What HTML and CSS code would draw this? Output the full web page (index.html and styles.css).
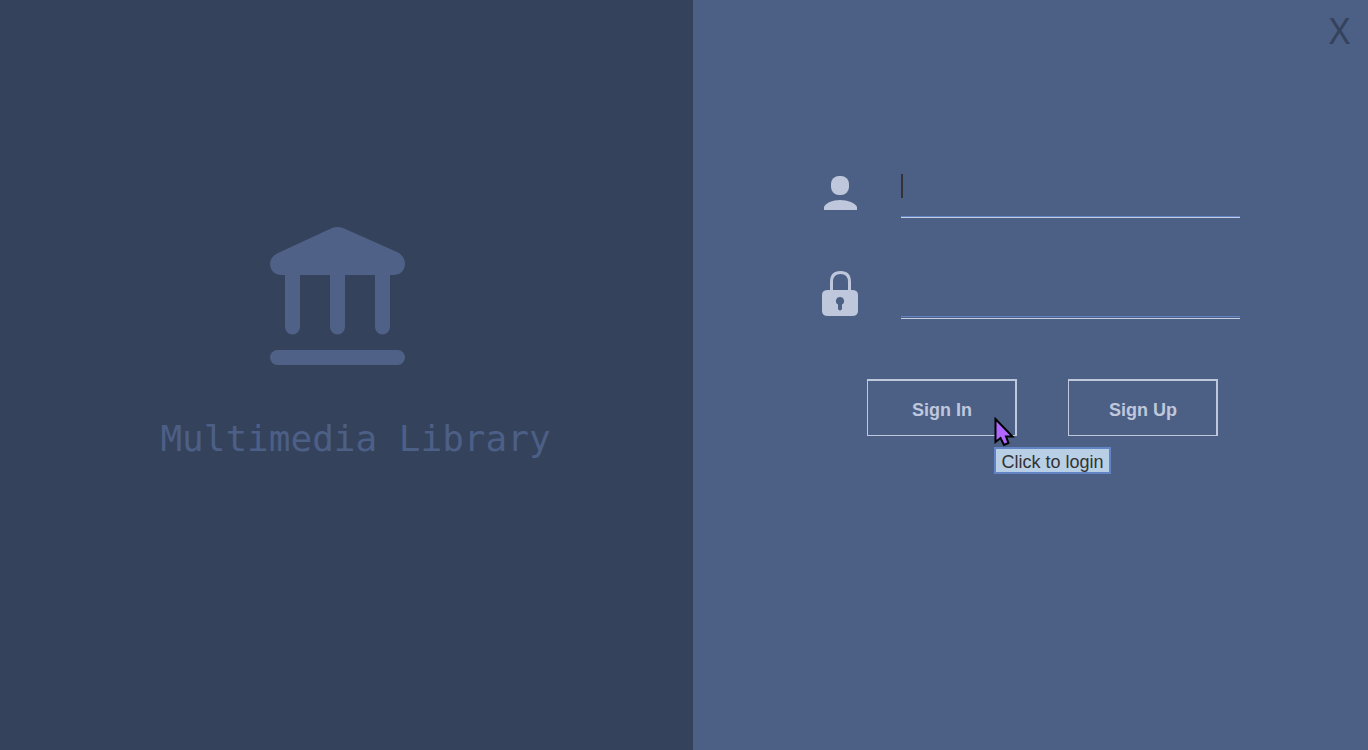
FILE: index.html
```html
<!DOCTYPE html>
<html lang="en">
<head>
<meta charset="utf-8">
<title>Multimedia Library</title>
<link rel="stylesheet" href="styles.css">
</head>
<body>
<main class="app">
  <section class="brand">
    <svg class="brand-logo" viewBox="0 0 135 138" aria-hidden="true">
      <path d="M8 26L62 1Q67.500 -1 73 1L127 25Q135 29 135 37Q134 48 123 48H120V100A7.500 7.500 0 0 1 105 100V48H75V100A7.500 7.500 0 0 1 60 100V48H30V100A7.500 7.500 0 0 1 15 100V48H12Q1 48 0 37Q0 30 8 26Z"/>
      <rect x="0" y="123" width="135" height="15" rx="7.500"/>
    </svg>
    <h1 class="brand-title">Multimedia Library</h1>
  </section>
  <section class="login">
    <button class="close" type="button" aria-label="Close">X</button>
    <form class="form">
      <div class="field">
        <label class="field-icon" for="user" aria-label="Username">
          <svg class="icon" viewBox="0 0 36 48" aria-hidden="true">
            <rect x="9" y="6" width="18" height="19" rx="8"/>
            <path d="M2 40V37C4 33 10 30 18 30S33 33 35 37V40Z"/>
          </svg>
        </label>
        <div class="entry">
          <input class="input" id="user" type="text" autocomplete="off">
          <span class="caret"></span>
        </div>
      </div>
      <div class="field">
        <label class="field-icon" for="pass" aria-label="Password">
          <svg class="icon" viewBox="0 0 36 48" aria-hidden="true">
            <path class="shackle" d="M9.500 21V12C9.500 5 13 2.500 18.500 2.500S27.500 5 27.500 12V21"/>
            <path fill-rule="evenodd" d="M6 20H30Q36 20 36 25V41Q36 46 30 46H6Q0 46 0 41V25Q0 20 6 20ZM18 27A4 4 0 0 0 16 34.500V39Q18 42 20 39V34.500A4 4 0 0 0 18 27Z"/>
          </svg>
        </label>
        <div class="entry entry-double">
          <input class="input" id="pass" type="password">
        </div>
      </div>
      <div class="actions">
        <div class="action">
          <button class="button" type="button" aria-describedby="tip">Sign In</button>
          <svg class="pointer" viewBox="0 0 22 30" aria-hidden="true">
            <path d="M1.500 2V25L6.500 21L10 28L14.500 26L12 19.500H18.500Z"/>
          </svg>
          <span class="tooltip" id="tip" role="tooltip">Click to login</span>
        </div>
        <button class="button" type="button">Sign Up</button>
      </div>
    </form>
  </section>
</main>
</body>
</html>
```
FILE: styles.css
```css
* {
  box-sizing: border-box;
}

body {
  margin: 0;
  font-family: "Liberation Sans", Arial, sans-serif;
  font-size: 18px;
}

.app {
  display: grid;
  grid-template-columns: 693fr 675fr;
  min-height: 100vh;
}

.brand {
  display: flex;
  flex-direction: column;
  align-items: center;
  padding: 227px 0 0 18px;
  background: #35425b;
}

.brand-logo {
  width: 135px;
  height: 138px;
  margin-right: 36px;
  fill: #4f6186;
}

.brand-title {
  margin: 52px 0 0;
  font-family: "DejaVu Sans Mono", monospace;
  font-size: 36px;
  font-weight: 400;
  line-height: 44px;
  white-space: nowrap;
  color: #4c5f86;
}

.login {
  display: flex;
  flex-direction: column;
  padding: 11px 18px 0 0;
  background: #4c5f85;
}

.close {
  align-self: flex-end;
  padding: 0;
  border: 0;
  background: none;
  color: #35425b;
  font-family: "Noto Sans", sans-serif;
  font-size: 36px;
  line-height: 40px;
}

.form {
  align-self: center;
  margin: 119px 0 0 18px;
}

.field {
  display: flex;
  align-items: flex-start;
  gap: 43px;
  margin-bottom: 52px;
}

.field-icon {
  display: block;
}

.icon {
  display: block;
  width: 36px;
  height: 48px;
  fill: #bfc7dc;
}

.shackle {
  fill: none;
  stroke: #bfc7dc;
  stroke-width: 3;
}

.entry {
  position: relative;
  width: 339px;
  height: 48px;
  border-bottom: 1px solid #c5cde2;
}

.entry-double {
  height: 49px;
}

.input {
  display: block;
  width: 100%;
  height: 100%;
  padding: 0 4px;
  border: 0;
  border-bottom: 1px solid #6384c4;
  outline: 0;
  background: none;
  color: #333333;
  font: inherit;
}

.entry-double .input {
  height: 47px;
}

.caret {
  position: absolute;
  left: 0;
  top: 4px;
  width: 2px;
  height: 24px;
  background: #333333;
}

.actions {
  display: flex;
  gap: 51px;
  margin: 60px 0 0 45px;
}

.action {
  position: relative;
}

.button {
  width: 150px;
  height: 57px;
  padding: 4px 0 0 2px;
  border: solid #bfc7dc;
  border-width: 2px 2px 1px 1px;
  background: none;
  color: #bfc7dc;
  font: bold 18px "Liberation Sans", Arial, sans-serif;
}

.pointer {
  position: absolute;
  left: 127px;
  top: 38px;
  width: 22px;
  height: 30px;
  fill: #b066ff;
  stroke: #000000;
  stroke-width: 2;
}

.tooltip {
  position: absolute;
  left: 127px;
  top: 68px;
  padding: 3px 5px 0 6px;
  border: 2px solid #6384c4;
  background: #b8cfe5;
  color: #333333;
  line-height: 20px;
  white-space: nowrap;
}
```
